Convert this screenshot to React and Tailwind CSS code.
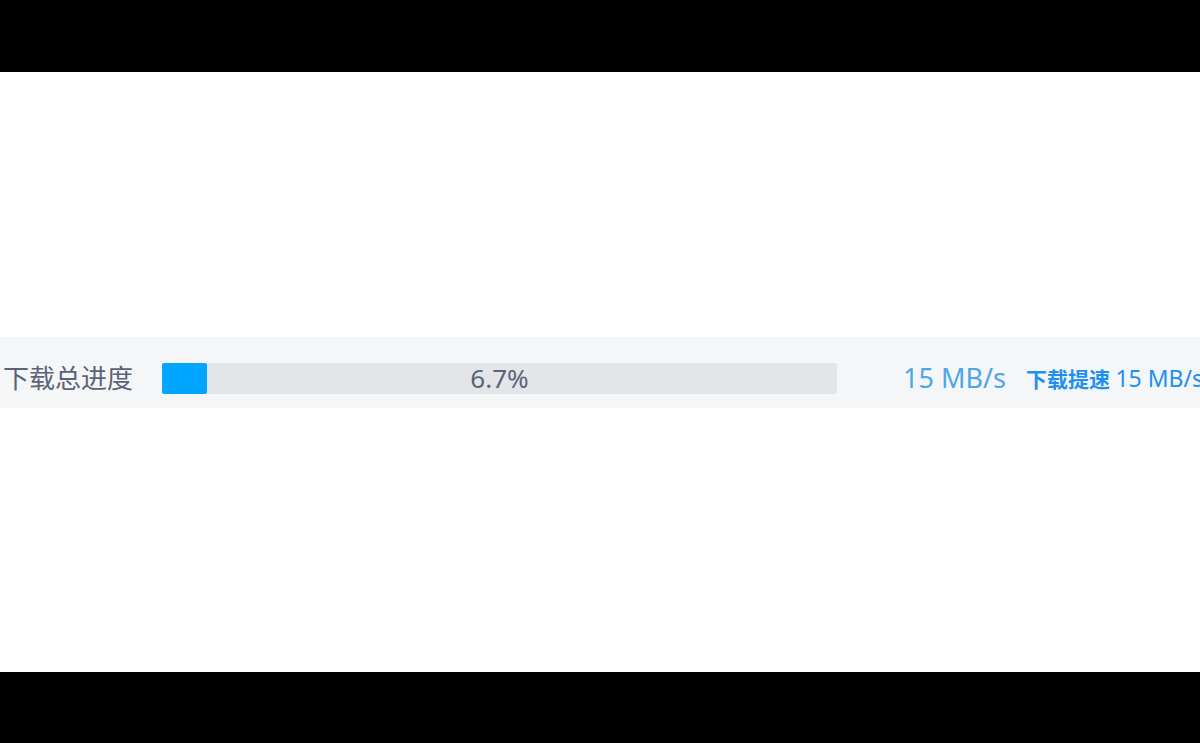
export default function App() {
  const percent = 6.7;

  return (
    <div className="flex h-[743px] w-[1200px] flex-col bg-black overflow-hidden">
      <div className="h-[72px] shrink-0 bg-black" />

      <div className="flex h-[600px] shrink-0 flex-col justify-center bg-white">
        {/* Total progress band */}
        <div
          className="flex h-[71px] items-center overflow-hidden whitespace-nowrap bg-[#f5f6f7] pt-[12px]"
          style={{ fontFamily: '"Noto Sans", "Noto Sans CJK SC", sans-serif' }}
        >
          <span className="w-[162px] shrink-0 pl-[3px] text-[26px] leading-none text-[#5a6478]">
            下载总进度
          </span>

          <div className="relative h-[31px] w-[675px] shrink-0 rounded-[2px] bg-[#e3e5e8]">
            <div
              className="h-full rounded-[2px] bg-[#00a6ff]"
              style={{ width: "45px" }}
            />
            <span className="absolute inset-0 flex items-center justify-center text-[26px] text-[#5a6478]">
              {percent}%
            </span>
          </div>

          <span className="ml-[66px] shrink-0 text-[27px] text-[#4fa6e8]">
            15 MB/s
          </span>
          <span className="ml-[20px] shrink-0 text-[21px] text-[#1e90f0]">
            <span className="font-semibold">下载提速</span>{" "}
            <span className="text-[23px]">15 MB/s</span>
          </span>
        </div>
      </div>

      <div className="h-[71px] shrink-0 bg-black" />
    </div>
  );
}
